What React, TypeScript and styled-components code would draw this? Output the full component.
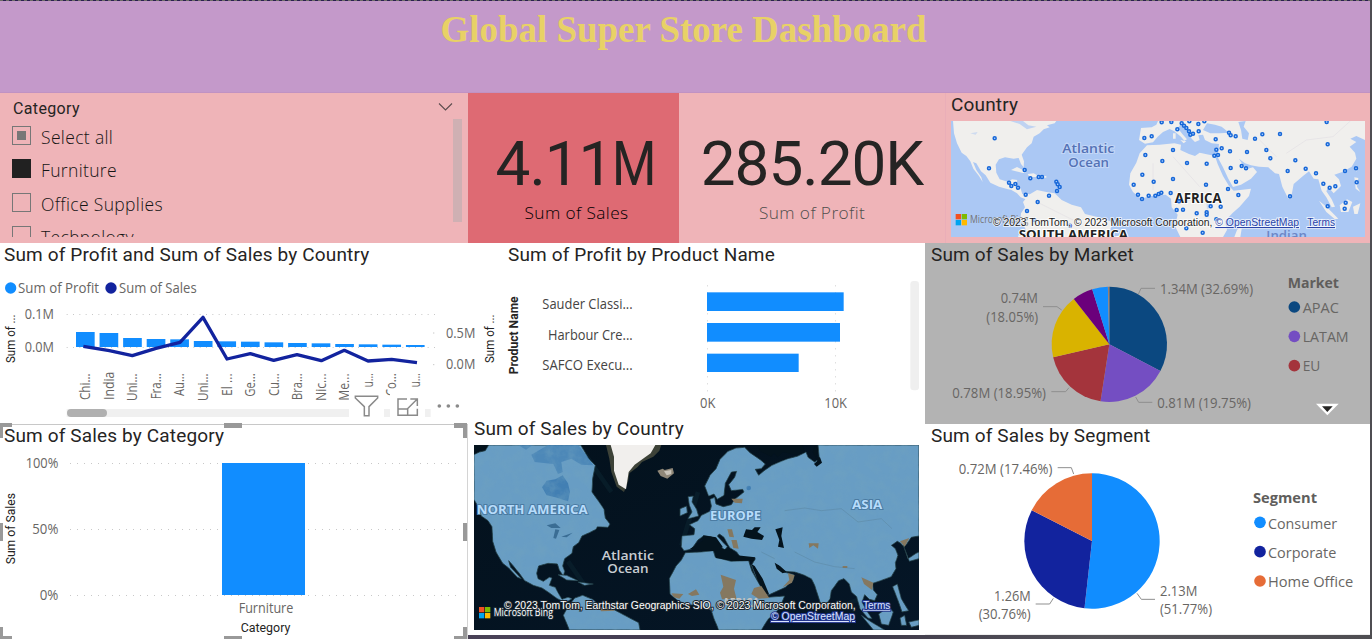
import React from 'react';
import styled, { createGlobalStyle } from 'styled-components';

const DIN = 'Roboto, "Liberation Sans", sans-serif';
const UI = '"Open Sans", "Noto Sans", sans-serif';
const BLUE = '#118dff';
const NAVY = '#12239e';
const ORANGE = '#e66c37';

const GlobalStyle = createGlobalStyle`
  * { box-sizing: border-box; }
  body { margin: 0; background: #4b494e; }
`;

const Page = styled.main`
  display: flex;
  flex-direction: column;
  width: 1372px;
  height: 639px;
  overflow: hidden;
  background: linear-gradient(90deg, #3a3345 0%, #4a4258 38%, #3c3648 60%, #55545a 80%, #4f4e52 100%);
`;

const Header = styled.header`
  width: 1370px;
  height: 93px;
  background: repeating-linear-gradient(90deg, #6d6a66 0 3px, #2a2050 3px 6px) top / 100% 1px no-repeat, #c499ca;
  border-bottom: 1px solid #c092c3;
  text-align: center;
`;

const Heading = styled.h1`
  margin: 0;
  padding: 9px 3px 0 0;
  font: bold 36.95px/42px "Liberation Serif", serif;
  color: #e8d166;
`;

const TopRow = styled.section`
  display: flex;
  width: 1370px;
  height: 150px;
  background: #efb4b8;
`;

const Slicer = styled.div`
  display: flex;
  width: 468px;
  padding: 6px 6px 6px 12px;
`;

const SlicerBody = styled.div`
  flex: 1;
  overflow: hidden;
  display: flex;
  flex-direction: column;
`;

const SlicerTitle = styled.div`
  flex: none;
  height: 21px;
  padding-left: 1px;
  font: 16px/20px ${DIN};
  letter-spacing: 0.35px;
  color: #252423;
`;

const SlicerRow = styled.label`
  flex: none;
  display: flex;
  align-items: center;
  gap: 10px;
  height: 33.5px;
  font: 17.5px/24px ${UI};
  font-weight: 300;
  letter-spacing: 0.35px;
  color: #151414;
`;

const Box = styled.span<{ $state: 'mixed' | 'on' | 'off' }>`
  width: 19px;
  height: 19px;
  margin-top: -3px;
  border: 1px solid ${p => (p.$state === 'on' ? '#212121' : '#777')};
  padding: 4px;
  background: ${p => (p.$state === 'off' ? 'none' : p.$state === 'on' ? '#212121' : '#777')};
  background-clip: ${p => (p.$state === 'mixed' ? 'content-box' : 'border-box')};
`;

const SlicerSide = styled.div`
  display: flex;
  flex-direction: column;
  align-items: flex-end;
  width: 24px;
`;

const Track = styled.div`
  width: 9px;
  height: 103px;
  margin-top: 8px;
  background: #cfb0b3;
`;

const Card = styled.div<{ $w: number; $bg: string; $label: string }>`
  display: flex;
  flex-direction: column;
  align-items: center;
  width: ${p => p.$w}px;
  padding-top: 35px;
  background: ${p => p.$bg};
  color: ${p => p.$label};
  font: 17.3px/26px ${UI};
  font-weight: 300;
  letter-spacing: 0.4px;
`;

const CardLabel = styled.div<{ $shift: number }>`
  padding-left: ${p => p.$shift}px;
`;

const CardValue = styled.div<{ $shift: number }>`
  display: flex;
  height: 72px;
  margin-left: ${p => p.$shift}px;
  font: 62px/72px ${DIN};
  letter-spacing: -1px;
  color: #252423;
`;

const NarrowGlyph = styled.span`
  width: 44px;
  transform: scaleX(0.82);
  transform-origin: left;
`;

const MapCard = styled.div`
  width: 425px;
  border-left: 1px solid #eaaeb8;
  padding: 0 5px 0 5px;
  line-height: 0;
`;

const Main = styled.div`
  display: flex;
  height: 396px;
`;

const Left = styled.div`
  display: flex;
  flex-direction: column;
  width: 925px;
`;

const Right = styled.div`
  width: 445px;
  height: 392px;
  background: #fff;
  border-bottom: 1px solid #eee;
`;

const Row = styled.div<{ $h: number }>`
  display: flex;
  height: ${p => p.$h}px;
`;

const Visual = styled.section<{ $w: number; $h: number; $bg?: string; $pad?: string }>`
  position: relative;
  width: ${p => p.$w}px;
  height: ${p => p.$h}px;
  padding: ${p => p.$pad ?? '0'};
  background: ${p => p.$bg ?? '#fff'};
  overflow: hidden;

  > svg { display: block; }
`;

const Title = styled.h2<{ $pad: number; $h?: number; $line?: number }>`
  margin: 0;
  height: ${p => p.$h ?? 25}px;
  padding-left: ${p => p.$pad}px;
  font: 400 19px/${p => p.$line ?? 24}px ${DIN};
  letter-spacing: 0.15px;
  color: #252423;
  white-space: nowrap;
`;

const Frame = styled.div`
  position: absolute;
  inset: 7px 0 0 0;
  border-top: 1px solid #c8c8c8;
  border-right: 1px solid #d4d4d4;

  > svg { display: block; }
`;

const Handles = styled.svg`
  position: absolute;
  left: 0;
  top: 6px;
`;

type TProps = {
  x: number; y: number; w?: number; size?: number; fill?: string; anchor?: 'start' | 'middle' | 'end';
  rot?: boolean; family?: string; weight?: number; halo?: string; underline?: boolean; children: React.ReactNode;
};

/* Chart label with a fixed advance width; `rot` turns it to read upwards. */
const T = ({ x, y, w, size = 42, fill = '#686664', anchor = 'start', rot, family = UI, weight = 400, halo, underline, children }: TProps) => (
  <text
    x={rot ? 0 : x} y={rot ? 0 : y}
    transform={rot ? `translate(${x} ${y}) rotate(-90)` : undefined}
    textLength={w} lengthAdjust="spacingAndGlyphs"
    fontSize={size} fill={fill} textAnchor={anchor} fontFamily={family} fontWeight={weight}
    stroke={halo} strokeWidth={halo ? 6 : undefined} paintOrder="stroke"
    textDecoration={underline ? 'underline' : undefined}
  >
    {children}
  </text>
);

const slicePath = (cx: number, cy: number, r: number, from: number, to: number) => {
  const pt = (f: number) => `${cx + r * Math.sin(f * 2 * Math.PI)} ${cy - r * Math.cos(f * 2 * Math.PI)}`;
  return `M${cx} ${cy}L${pt(from)}A${r} ${r} 0 ${to - from > 0.5 ? 1 : 0} 1 ${pt(to)}Z`;
};

const Pie = ({ cx, cy, r, slices }: { cx: number; cy: number; r: number; slices: [number, string][] }) => (
  <g>
    {slices.map(([end, color], i) => (
      <path key={color} d={slicePath(cx, cy, r, i ? slices[i - 1][0] : 0, end)} fill={color} />
    ))}
  </g>
);

const Leader = ({ d }: { d: string }) => <path d={d} fill="none" stroke="#8f8f8f" strokeWidth={3} />;

const Dots = ({ d }: { d: string }) => (
  <path d={d} fill="none" stroke="#c8c8c8" strokeWidth={3} strokeDasharray="3 16" />
);

const Squares = ({ x, y, s }: { x: number; y: number; s: number }) => (
  <g>
    <rect x={x} y={y} width={s} height={s} fill="#f25022" />
    <rect x={x + s + 2} y={y} width={s} height={s} fill="#7fba00" />
    <rect x={x} y={y + s + 2} width={s} height={s} fill="#00a4ef" />
    <rect x={x + s + 2} y={y + s + 2} width={s} height={s} fill="#ffb900" />
  </g>
);

const cities = [
  [165, 145], [148, 235], [255, 240], [272, 265], [297, 261], [307, 261], [208, 278], [215, 288], [227, 282], [235, 293],
  [350, 275], [354, 283], [360, 291], [352, 303], [258, 314], [328, 317], [294, 336], [262, 363], [284, 390], [391, 407],
  [614, 144], [636, 139], [666, 97], [695, 96], [713, 118], [726, 100], [733, 107], [740, 114], [748, 124], [752, 134],
  [760, 131], [777, 124], [776, 102], [749, 94], [794, 94], [617, 195], [700, 180], [668, 213], [742, 219], [801, 221],
  [828, 148], [868, 128], [873, 136], [888, 139], [830, 179], [846, 175], [824, 197], [835, 195], [871, 184], [922, 186],
  [946, 146], [968, 133], [1021, 132], [980, 180], [992, 205], [1067, 211], [1044, 243], [1098, 236], [1129, 250],
  [1161, 96], [1164, 163], [1216, 243], [1249, 235], [1251, 277], [1151, 281], [1170, 293], [1187, 289], [1218, 338],
  [1215, 356], [1164, 349], [1051, 319], [873, 234], [906, 228], [919, 235], [889, 275], [865, 297], [896, 315],
  [608, 254], [582, 284], [642, 275], [700, 267], [799, 284], [595, 314], [607, 327], [627, 317], [647, 317], [657, 312],
  [665, 308], [693, 309], [718, 334], [711, 360], [730, 359], [771, 370], [801, 367], [801, 374], [813, 349], [843, 350],
  [830, 388], [740, 415], [789, 428],
];

const CountryMap = () => (
  <svg width={414} height={116} viewBox="34 93 1242 348" preserveAspectRatio="none">
    <rect x={34} y={93} width={1242} height={348} fill="#abc8f4" />
    <g fill="#f0efed">
      <path d="M40 93L43 130 52 160 66 188 80 198 92 214 101 236 118 258 129 276 125 262 110 240 100 216 110 220 124 244 138 256 152 278 178 290 205 298 214 299 232 310 243 322 262 329 276 324 268 312 248 312 243 296 228 284 233 270 217 268 206 276 180 268 170 248 168 224 178 208 196 202 222 206 237 204 244 222 252 232 253 214 246 194 262 172 276 160 282 140 300 130 312 118 330 112 322 106 345 100 350 93Z" />
      <path d="M214 240L232 231 262 246 250 249ZM264 252L282 250 300 260 270 262ZM306 258h14v5h-14Z" />
      <path d="M250 336L268 314 292 300 320 306 345 310 366 330 396 344 424 352 436 372 476 382 512 394 517 408 500 441H270L254 410 242 388 244 370 256 352Z" />
      <path d="M655 93L650 104 636 112 604 114 598 150 616 161 640 157 654 140 670 126 690 117 704 124 724 140 734 152 742 148 728 132 714 114 722 104 744 122 756 146 766 156 780 150 776 136 790 134 796 150 816 160 838 162 836 184 832 198 850 232 866 266 880 291 904 284 934 266 952 246 940 232 924 236 908 222 898 206 916 220 934 226 958 230 986 232 1006 250 1018 252 1028 290 1046 326 1056 314 1062 282 1090 258 1108 244 1122 266 1136 268 1146 302 1160 322 1176 352 1186 350 1176 328 1160 304 1166 292 1182 310 1204 288 1198 268 1184 254 1208 246 1236 230 1250 206 1246 188 1230 170 1250 156 1232 146 1250 138 1276 150V93Z" />
      <path d="M622 166L660 164 704 160 724 164 722 180 748 192 766 198 780 188 826 198 834 222 850 258 868 288 882 302 934 296 928 318 900 350 878 370 856 394 862 420 850 441H722L706 408 714 374 696 352 694 326 678 314 634 318 604 326 580 306 568 284 572 250 590 218 600 190Z" />
      <path d="M892 420L908 404 902 441H884ZM1200 346L1222 328 1238 336 1226 366 1204 366ZM1138 332L1162 352 1196 386 1186 388 1160 366ZM1246 236L1252 226 1250 246ZM1244 262L1256 264 1252 290 1262 306 1248 296ZM1240 350L1262 340 1254 372 1244 372Z" />
      <path d="M700 130h8v16h-8ZM722 150l18 4-8 6Z" />
    </g>
    <g fill="#abc8f4">
      <path d="M790 120L802 100 826 104 846 110 868 128 840 130 812 130ZM896 96L918 93 912 110 928 130 924 150 908 146 904 120Z" />
      <path d="M212 93L250 93 266 106 290 110 262 118 240 102Z" opacity={0.7} />
      <path d="M92 130l22-4-6 8ZM800 340l12-8 2 20-12 6Z" opacity={0.5} />
    </g>
    <path d="M1232 93L1180 140 1100 150 1040 190M960 150L1010 200M700 200L780 290M640 220L640 300M740 330L840 330M300 340L420 400" fill="none" stroke="#e2e0e4" strokeWidth={2} />
    <T x={368} y={189} w={156} size={37} fill="#5472b5" weight={600} halo="#c3d7f7">Atlantic</T>
    <T x={386} y={230} w={122} size={37} fill="#5472b5" weight={600} halo="#c3d7f7">Ocean</T>
    <T x={705} y={338} w={141} size={42} fill="#222" weight={700} halo="#fff">AFRICA</T>
    <T x={237} y={447} w={328} size={37} fill="#222" weight={700} halo="#fff">SOUTH AMERICA</T>
    <T x={980} y={449} w={122} size={36} fill="#6c86c6" weight={600}>Indian</T>
    {cities.map(([x, y]) => (
      <circle key={`${x}-${y}`} cx={x} cy={y} r={4.5} fill="#b9d8ff" stroke="#1767d8" strokeWidth={4.500} />
    ))}
    <Squares x={48} y={372} s={16} />
    <T x={91} y={399} w={175} size={30} fill="#737373">Microsoft Bing</T>
    <T x={160} y={408} w={658} size={32} fill="#1c1c1c" family="Liberation Sans, sans-serif" halo="#ffffffb0">© 2023 TomTom, © 2023 Microsoft Corporation,</T>
    <T x={827} y={408} w={251} size={32} fill="#2a44a8" family="Liberation Sans, sans-serif" halo="#ffffffb0" underline>© OpenStreetMap</T>
    <T x={1103} y={408} w={83} size={32} fill="#2a44a8" family="Liberation Sans, sans-serif" halo="#ffffffb0" underline>Terms</T>
  </svg>
);

const SatelliteMap = () => (
  <svg width={445} height={185} viewBox="18 99 1335 555" preserveAspectRatio="none">
    <defs>
      <filter id="terrain" x="0" y="0" width="100%" height="100%">
        <feTurbulence type="fractalNoise" baseFrequency="0.03" numOctaves={5} seed={8} />
        <feColorMatrix values="0 0 0 0 0.16  0 0 0 0 0.36  0 0 0 0 0.52  0 2.2 0 0 -0.85" />
        <feComposite in2="SourceGraphic" operator="in" />
      </filter>
      <linearGradient id="sea" x1="0" y1="0" x2="1" y2="1">
        <stop offset="0" stopColor="#03111c" />
        <stop offset="1" stopColor="#051627" />
      </linearGradient>
      <g id="land">
        <path d="M18 128L34 120 52 116 62 99H338L352 122 360 138 382 160 374 200 372 240 392 268 408 292 412 318 426 336 420 346 388 344 384 352 364 362 342 372 332 392 316 404 312 424 290 440 284 462 290 478 286 492 274 474 268 456 240 454 212 462 206 484 210 500 226 508 244 496 252 498 244 520 262 526 270 542 282 562 300 556 312 560 292 572 268 560 240 540 222 528 196 520 170 506 154 484 136 462 122 446 128 466 160 500 148 496 122 468 104 454 84 420 74 388 72 344 60 326 40 312 28 280 18 262Z" />
        <path d="M286 610L300 584 320 558 344 550 374 562 400 586 440 594 470 610 512 632 516 654H304Z" />
        <path d="M710 222L726 190 744 170 756 142 780 118 804 108 830 106 846 122 878 144 892 156 880 170 862 172 872 190 888 176 912 160 940 148 960 140 990 132 1014 120 1020 136 1040 150 1054 140 1050 99H1353V372L1330 376 1316 396 1308 404 1298 394 1288 388 1270 400 1282 410 1290 430 1282 452 1284 470 1270 494 1238 506 1214 514 1216 534 1228 548 1220 566 1204 562 1190 548 1182 570 1196 596 1212 620 1200 618 1176 590 1166 554 1150 540 1144 516 1128 500 1112 506 1090 536 1086 560 1070 584 1056 570 1040 520 1030 500 1010 490 980 480 950 478 930 460 940 478 978 488 976 504 952 526 900 550 882 528 862 490 850 460 862 440 820 440 806 420 786 408 780 398 768 376 754 366 748 372 766 392 778 404 770 414 748 394 730 374 706 372 690 384 670 412 648 416 640 404 642 372 678 368 680 350 664 338 690 326 700 310 726 298 730 282 726 262 740 256 744 276 766 284 790 278 800 262 828 240 824 232 790 236 782 218 800 196 806 178 790 180 772 214 768 250 748 262 738 246 722 252Z" />
        <path d="M660 254L676 252 672 270 686 292 692 312 660 320 672 300 664 280ZM636 290L656 282 658 302 636 312Z" />
        <path d="M652 422L700 420 736 416 742 436 790 448 842 446 852 478 876 520 898 556 950 552 934 590 900 622 880 654H752L738 620 730 596 700 576 660 580 630 566 606 546 604 500 624 462 640 444Z" />
        <path d="M1180 610L1210 630 1250 654H1216ZM1232 606L1262 584 1276 600 1262 640 1240 636ZM1274 524L1288 516 1300 560 1322 596 1302 600 1288 560ZM1306 400L1320 440 1344 424 1353 420V440L1324 448ZM1296 618L1310 610 1316 640 1300 640ZM1322 630L1353 624V640L1330 646Z" />
        <path d="M270 488L296 490 330 506 296 504ZM330 510L376 516 350 520Z" />
      </g>
    </defs>
    <rect x={18} y={99} width={1335} height={555} fill="url(#sea)" />
    <path d="M352 128L430 240M300 448L350 520M690 240L640 400M1070 600L1180 560" fill="none" stroke="#0c2631" strokeWidth={14} opacity={0.5} />
    <use href="#land" fill="#689dc4" stroke="#1f3a40" strokeWidth={2.500} />
    <g fill="#427fb3">
      <path d="M222 226L236 206 262 202 284 190 300 214 306 240 300 268 280 262 262 256 236 250Z" />
      <path d="M240 99L330 99 356 130 376 160 340 158 310 140 280 150 284 180 270 186 256 156 200 150 190 128Z" opacity={0.7} />
      <path d="M150 99h44l-20 14Z" opacity={0.6} />
      <circle cx={842} cy={228} r={7} />
    </g>
    <use href="#land" filter="url(#terrain)" opacity={0.5} />
    <path d="M236 340L262 334 278 348 250 348ZM256 378L262 352 274 354 264 380ZM280 374L314 362 296 376Z" fill="#3a6d94" />
    <g fill="#04131d">
      <path d="M826 374L834 352 852 354 860 346 878 346 868 360 888 372 882 384 850 380ZM922 352L944 346 940 372 948 408 930 404 934 384ZM1042 99L1050 112 1044 138 1056 136 1062 152 1046 164 1038 156 1048 146 1034 120Z" />
      <path d="M850 456L860 462 884 500 904 548 892 546 870 508ZM920 452L936 462 956 480 944 484 926 470Z" />
      <path d="M740 412L790 412 806 430 862 436 858 446 790 446 744 438ZM664 412L704 386 706 370 744 376 764 404 744 418Z" />
    </g>
    <g fill="#857860">
      <path d="M758 488L804 504 798 530 806 562H762L756 542 766 524ZM858 528L880 522 904 558 872 560 850 546ZM960 484L980 490 972 512 944 526 964 504ZM610 544L646 546 634 560 618 556ZM660 546L684 532 694 548 672 552ZM778 352L792 352 798 376 784 374ZM790 384L806 384 812 410 796 408ZM790 260L824 260 822 274 800 272ZM1022 394L1052 394 1050 410 1036 400 1024 408ZM1124 462h14v6h-14ZM1180 496L1216 512 1212 534 1188 516ZM1296 388L1324 378 1310 404ZM392 588L432 584 440 596 400 598Z" />
      <path d="M568 176L584 170 590 174 614 168 618 184 598 200 578 192Z" fill="#8f8778" />
      <path d="M588 178L610 174 610 186 596 190Z" fill="#c9c4ba" />
    </g>
    <path d="M414 99H580L574 116 556 134 522 150 508 166 484 184 480 210 468 240 446 224 430 180 424 140Z" fill="#3d4238" />
    <path d="M428 99H562L548 124 528 138 500 158 482 180 474 232 452 218 438 176 438 134Z" fill="#f1efed" />
    <path d="M18 120l24-14 12-7H18ZM870 99L876 118 910 134 918 124 930 136 944 120 980 128 1010 122 1004 99Z" fill="#04131d" />
    <path d="M950 296L1010 288 1060 296 1120 290 1170 330 1240 320 1272 350M980 420L1040 450 1100 464 1160 470M880 420L920 440" fill="none" stroke="#50748a" strokeWidth={1.500} opacity={0.6} />
    <T x={26} y={305} w={333} size={39} fill="#b7dcfb" weight={700} halo="#4b7ba2">NORTH AMERICA</T>
    <T x={726} y={325} w={153} size={39} fill="#b7dcfb" weight={700} halo="#4b7ba2">EUROPE</T>
    <T x={1152} y={292} w={91} size={39} fill="#b7dcfb" weight={700} halo="#4b7ba2">ASIA</T>
    <T x={401} y={443} w={157} size={37} fill="#c8cdd2" weight={600}>Atlantic</T>
    <T x={418} y={484} w={124} size={37} fill="#c8cdd2" weight={600}>Ocean</T>
    <T x={764} y={586} w={110} size={36} fill="#c3c3bf" weight={700}>AFRICA</T>
    <Squares x={33} y={585} s={16} />
    <T x={77} y={613} w={178} size={30} fill="#fff" halo="#20303c">Microsoft Bing</T>
    <T x={108} y={591} w={1055} size={32} fill="#fff" family="Liberation Sans, sans-serif" halo="#1a242c">© 2023 TomTom, Earthstar Geographics SIO, © 2023 Microsoft Corporation,</T>
    <T x={1185} y={590} w={82} size={32} fill="#d9e4ff" family="Liberation Sans, sans-serif" halo="#22348c" underline>Terms</T>
    <T x={909} y={624} w={252} size={32} fill="#d9e4ff" family="Liberation Sans, sans-serif" halo="#22348c" underline>© OpenStreetMap</T>
  </svg>
);

const barTops = [276, 279, 294, 297, 298, 303, 304, 305, 307, 309, 310, 312, 313, 314, 315];
const salesPoints = '255,320 328,332 397,347 468,325 540,307 609,232 681,357 751,341 821,361 891,344 964,362 1033,331 1104,363 1175,358 1246,367';
const countries: [string, number][] = [
  ['Chi...', 80], ['India', 85], ['Uni...', 83], ['Fra...', 78], ['Au...', 68], ['Uni...', 83], ['El ...', 68], ['Ge...', 70],
  ['Cu...', 68], ['Bra...', 80], ['Nic...', 83], ['Me...', 82], ['u...', 42], ['Co...', 68], ['u...', 42],
];

const ComboChart = () => (
  <svg width={500} height={149} viewBox="0 84 1500 447">
    <circle cx={32} cy={144} r={17} fill={BLUE} />
    <T x={54} y={159} w={243}>Sum of Profit</T>
    <circle cx={333} cy={144} r={17} fill={NAVY} />
    <T x={357} y={159} w={233}>Sum of Sales</T>
    <T x={162} y={237} w={88} anchor="end">0.1M</T>
    <T x={162} y={336} w={88} anchor="end">0.0M</T>
    <T x={1338} y={293} w={88}>0.5M</T>
    <T x={1338} y={386} w={88}>0.0M</T>
    <T x={44} y={369} w={146} rot size={36} family={DIN} fill="#252423">Sum of ...</T>
    <T x={1482} y={369} w={146} rot size={36} family={DIN} fill="#252423">Sum of ...</T>
    <Dots d="M200 223.500H1305M200 322.500H1305" />
    <path d="M1299 279h4M1299 374h4" stroke="#c8c8c8" strokeWidth={3} />
    {barTops.map((top, i) => (
      <rect key={i} x={228 + i * 70.7} y={top} width={56} height={321 - top} fill={BLUE} />
    ))}
    <polyline points={salesPoints} fill="none" stroke={NAVY} strokeWidth={10} strokeLinejoin="round" strokeLinecap="square" />
    {countries.map(([name, w], i) => (
      <T key={i} x={271 + i * 70.6} y={(i === 1 ? 395 : 400) + w} w={w} rot>{name}</T>
    ))}
    <rect x={200} y={507} width={1092} height={27} fill="#f0f0f0" />
    <rect x={201} y={507} width={120} height={24} rx={12} fill="#b0b0b0" />
    <path d="M1047 447H1152V534H1047ZM1170 447H1275V534H1170ZM1293 447H1400V534H1293Z" fill="#fff" />
    <g fill="none" stroke="#8a8a8a" strokeWidth={4.500}>
      <path d="M1066 469H1133V474L1107 500V527H1093V500L1066 474Z" />
      <path d="M1221 477H1194V526H1252V506M1194 507H1223V526M1221 508L1251 478M1231 477H1252V498" />
    </g>
    <g fill="#8a8a8a">
      <circle cx={1318} cy={498} r={5.500} />
      <circle cx={1345} cy={498} r={5.500} />
      <circle cx={1372} cy={498} r={5.500} />
    </g>
  </svg>
);

const ProductChart = () => (
  <svg width={425} height={149} viewBox="105 84 1275 447">
    <T x={160} y={403} w={234} rot size={38} weight={700} family={DIN} fill="#252423">Product Name</T>
    <T x={232} y={208} w={271} fill="#454443">Sauder Classi...</T>
    <T x={249} y={301} w={254} fill="#454443">Harbour Cre...</T>
    <T x={232} y={391} w={271} fill="#454443">SAFCO Execu...</T>
    <path d="M727.500 136V460M1111.500 136V460" stroke="#cfcfcf" strokeWidth={3} strokeDasharray="3 18" />
    <rect x={726} y={157} width={410} height={56} fill={BLUE} />
    <rect x={726} y={249} width={399} height={56} fill={BLUE} />
    <rect x={726} y={341} width={275} height={55} fill={BLUE} />
    <T x={705} y={504} w={46}>0K</T>
    <T x={1078} y={504} w={68}>10K</T>
    <rect x={1336} y={123} width={26} height={328} rx={10} fill="#efefef" />
  </svg>
);

const MarketPie = () => (
  <svg width={445} height={156} viewBox="9 84 1335 468">
    <Pie cx={562} cy={313} r={173} slices={[[0.3269, '#0b4880'], [0.5244, '#744ec2'], [0.7139, '#a4343c'], [0.8944, '#d9b300'], [0.952, '#6b007b'], [0.996, BLUE], [1, '#9a7f70']]} />
    <Leader d="M649 163L657 145H699" />
    <Leader d="M363 200H405L419 210" />
    <Leader d="M388 455H431L441 443" />
    <Leader d="M641 471L650 487H691" />
    <T x={714} y={163} w={279}>1.34M (32.69%)</T>
    <T x={348} y={189} w={112} anchor="end">0.74M</T>
    <T x={348} y={246} w={155} anchor="end">(18.05%)</T>
    <T x={372} y={474} w={281} anchor="end">0.78M (18.95%)</T>
    <T x={706} y={504} w={281}>0.81M (19.75%)</T>
    <T x={1097} y={144} w={154} size={43} weight={700} fill="#605e5c">Market</T>
    <circle cx={1117} cy={201} r={17.500} fill="#0b4880" />
    <circle cx={1117} cy={289} r={17.500} fill="#744ec2" />
    <circle cx={1117} cy={377} r={17.500} fill="#a4343c" />
    <T x={1142} y={219} w={109} size={45}>APAC</T>
    <T x={1142} y={306} w={138} size={45}>LATAM</T>
    <T x={1142} y={393} w={53} size={45}>EU</T>
    <path d="M1182 491H1250L1216 526Z" fill="#fff" />
    <path d="M1200 499H1232L1216 516Z" fill="#252423" />
  </svg>
);

const SegmentPie = () => (
  <svg width={445} height={186} viewBox="9 87 1335 558">
    <Pie cx={510} cy={363} r={203} slices={[[0.5177, BLUE], [0.8253, NAVY], [1, ORANGE]]} />
    <Leader d="M407 143H448L455 162" />
    <Leader d="M341 552H383L394 535" />
    <Leader d="M645 520L658 538H699" />
    <T x={391} y={163} w={281} anchor="end">0.72M (17.46%)</T>
    <T x={326} y={543} w={110} anchor="end">1.26M</T>
    <T x={326} y={597} w={156} anchor="end">(30.76%)</T>
    <T x={714} y={528} w={112}>2.13M</T>
    <T x={714} y={583} w={156}>(51.77%)</T>
    <T x={993} y={249} w={192} size={43} weight={700} fill="#605e5c">Segment</T>
    <circle cx={1014} cy={307} r={17.500} fill={BLUE} />
    <circle cx={1014} cy={395} r={17.500} fill={NAVY} />
    <circle cx={1014} cy={483} r={17.500} fill={ORANGE} />
    <T x={1038} y={327} w={207} size={45}>Consumer</T>
    <T x={1038} y={414} w={205} size={45}>Corporate</T>
    <T x={1038} y={501} w={256} size={45}>Home Office</T>
  </svg>
);

const CategoryChart = () => (
  <svg width={467} height={189} viewBox="0 90 1401 567">
    <T x={175} y={144} w={98} anchor="end">100%</T>
    <T x={175} y={342} w={78} anchor="end">50%</T>
    <T x={175} y={540} w={56} anchor="end">0%</T>
    <path d="M210 130.500H1380M210 328.500H1380M210 526.500H1380" stroke="#c8c8c8" strokeWidth={3} strokeDasharray="3 18" />
    <rect x={666} y={129} width={249} height={396} fill={BLUE} />
    <T x={45} y={433} w={214} rot size={36} family={DIN} fill="#252423">Sum of Sales</T>
    <T x={716} y={580} w={164}>Furniture</T>
    <T x={722} y={636} w={149} size={36} family={DIN} fill="#252423">Category</T>
  </svg>
);

export default function App() {
  return (
    <Page>
      <GlobalStyle />
      <Header>
        <Heading>Global Super Store Dashboard</Heading>
      </Header>
      <TopRow>
        <Slicer>
          <SlicerBody>
            <SlicerTitle>Category</SlicerTitle>
            <SlicerRow><Box $state="mixed" />Select all</SlicerRow>
            <SlicerRow><Box $state="on" />Furniture</SlicerRow>
            <SlicerRow><Box $state="off" />Office Supplies</SlicerRow>
            <SlicerRow><Box $state="off" />Technology</SlicerRow>
          </SlicerBody>
          <SlicerSide>
            <svg width={24} height={12} viewBox="0 0 24 12"><path d="M1 4.500L7.500 11L14 4.500" fill="none" stroke="#5c4c4e" strokeWidth={1.100} /></svg>
            <Track />
          </SlicerSide>
        </Slicer>
        <Card $w={211} $bg="#de6a73" $label="#000">
          <CardValue $shift={5}>4.11<NarrowGlyph>M</NarrowGlyph></CardValue>
          <CardLabel $shift={6}>Sum of Sales</CardLabel>
        </Card>
        <Card $w={266} $bg="#efb4b8" $label="#504e4c">
          <CardValue $shift={0}>285.20K</CardValue>
          <CardLabel $shift={0}>Sum of Profit</CardLabel>
        </Card>
        <MapCard>
          <Title $pad={0} $h={28}>Country</Title>
          <CountryMap />
        </MapCard>
      </TopRow>
      <Main>
        <Left>
          <Row $h={174}>
            <Visual $w={500} $h={174}>
              <Title $pad={4}>Sum of Profit and Sum of Sales by Country</Title>
              <ComboChart />
            </Visual>
            <Visual $w={425} $h={174}>
              <Title $pad={8}>Sum of Profit by Product Name</Title>
              <ProductChart />
            </Visual>
          </Row>
          <Row $h={222}>
            <Visual $w={468} $h={222}>
              <Frame>
                <Title $pad={4} $line={22}>Sum of Sales by Category</Title>
                <CategoryChart />
              </Frame>
              <Handles width={468} height={216} viewBox="0 0 468 216">
                <path
                  fill="#999"
                  d="M0 0H12V4H3V15H0ZM224 0H242V5H224ZM454 0H467V15H463V5H454ZM0 100H3V118H0ZM463 100H467V118H463ZM0 204H3V213H12V216H0ZM224 213H242V216H224ZM463 204H467V216H454V213H463Z"
                />
              </Handles>
            </Visual>
            <Visual $w={457} $h={218} $pad="0 0 0 6px">
              <Title $pad={0} $h={28}>Sum of Sales by Country</Title>
              <SatelliteMap />
            </Visual>
          </Row>
        </Left>
        <Right>
          <Visual $w={445} $h={181} $bg="#b3b3b3">
            <Title $pad={6}>Sum of Sales by Market</Title>
            <MarketPie />
          </Visual>
          <Visual $w={445} $h={210}>
            <Title $pad={6} $line={23}>Sum of Sales by Segment</Title>
            <SegmentPie />
          </Visual>
        </Right>
      </Main>
    </Page>
  );
}
